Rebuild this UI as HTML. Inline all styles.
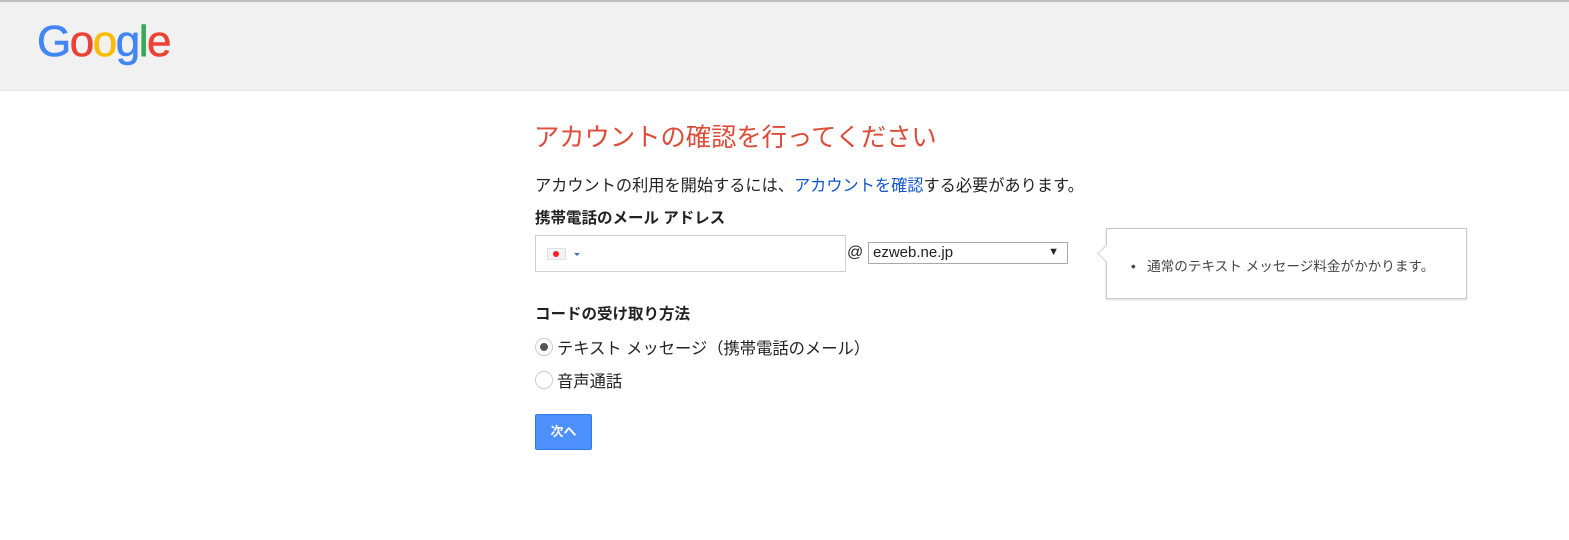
<!DOCTYPE html>
<html><head><meta charset="utf-8"><style>
body{margin:0;width:1569px;height:540px;background:#fff;font-family:"Liberation Sans","Noto Sans CJK JP",sans-serif;color:#222;position:relative;overflow:hidden}
.hd{position:absolute;left:0;top:0;width:1569px;height:91px;background:#f1f1f1;border-top:2px solid #bdbdbd;border-bottom:1px solid #e5e5e5;box-sizing:border-box}
.logo{position:absolute;left:37px;top:15px;font-size:44px;font-family:"Liberation Sans",sans-serif;letter-spacing:-1.5px;-webkit-text-stroke:0.6px currentColor}
.a{position:absolute;white-space:nowrap}
</style></head><body>
<div class="hd"><div class="logo"><span style="color:#4285f4">G</span><span style="color:#ea4335">o</span><span style="color:#fbbc05">o</span><span style="color:#4285f4">g</span><span style="color:#34a853">l</span><span style="color:#ea4335">e</span></div></div>
<div class="a" style="left:534px;top:118px;font-size:25.3px;color:#dd4b39">アカウントの確認を行ってください</div>
<div class="a" style="left:535px;top:172px;font-size:16.2px;color:#222">アカウントの利用を開始するには、<span style="color:#1155cc">アカウントを確認</span>する必要があります。</div>
<div class="a" style="left:535px;top:206px;font-size:15.5px;font-weight:bold">携帯電話のメール アドレス</div>
<div class="a" style="left:535px;top:235px;width:311px;height:37px;border:1px solid #d0d0d0;box-sizing:border-box">
 <div style="position:absolute;left:11px;top:12px;width:19px;height:12px;background:#f4f4f4;border:1px solid #e0e0e0;box-sizing:border-box"><div style="position:absolute;left:5px;top:2px;width:6px;height:6px;border-radius:50%;background:#f22"></div></div>
 <div style="position:absolute;left:38px;top:17px;border-left:3px solid transparent;border-right:3px solid transparent;border-top:3px solid #4a6fb8"></div>
</div>
<div class="a" style="left:847px;top:244px;font-size:16px">@</div>
<div class="a" style="left:868px;top:242px;width:200px;height:22px;border:1px solid #a9a9a9;box-sizing:border-box;font-size:15px;padding:1px 0 0 4px">ezweb.ne.jp<span style="position:absolute;right:8px;top:3px;font-size:11px">▼</span></div>
<div class="a" style="left:1106px;top:228px;width:361px;height:71px;border:1px solid #c8c8c8;box-sizing:border-box;box-shadow:0 1px 2px rgba(0,0,0,.15);background:#fff">
 <div style="position:absolute;left:-7px;top:18px;width:12px;height:12px;background:#fff;border-left:1px solid #d0d0d0;border-bottom:1px solid #d0d0d0;transform:rotate(45deg)"></div>
 <div class="a" style="left:24px;top:26px;font-size:13.6px;color:#444">•&nbsp;&nbsp;&nbsp;通常のテキスト メッセージ料金がかかります。</div>
</div>
<div class="a" style="left:535px;top:302px;font-size:15.5px;font-weight:bold">コードの受け取り方法</div>
<div class="a" style="left:535px;top:338px;width:18px;height:18px;border:1px solid #ccc;border-radius:50%;box-sizing:border-box"><div style="position:absolute;left:4px;top:4px;width:8px;height:8px;border-radius:50%;background:#555"></div></div>
<div class="a" style="left:557px;top:335px;font-size:16.3px">テキスト メッセージ（携帯電話のメール）</div>
<div class="a" style="left:535px;top:371px;width:18px;height:18px;border:1px solid #ccc;border-radius:50%;box-sizing:border-box"></div>
<div class="a" style="left:557px;top:368px;font-size:16.3px">音声通話</div>
<div class="a" style="left:535px;top:414px;width:57px;height:36px;background:#4d90fe;border:1px solid #3079ed;box-sizing:border-box;border-radius:2px;color:#fff;font-weight:bold;font-size:13px;text-align:center;line-height:34px">次へ</div>
</body></html>
